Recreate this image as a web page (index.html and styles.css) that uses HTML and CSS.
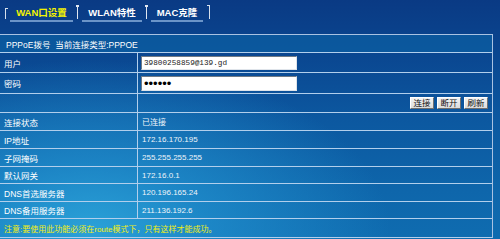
FILE: index.html
```html
<!DOCTYPE html>
<html lang="zh-CN">
<head>
<meta charset="utf-8">
<title>WAN口设置</title>
<link rel="stylesheet" href="styles.css">
</head>
<body>
<div class="tabs">
  <span class="brk brk-l"></span>
  <span class="tab tab-on tab-w1">WAN口设置</span>
  <span class="sep"></span>
  <span class="tab tab-w2">WLAN特性</span>
  <span class="sep"></span>
  <span class="tab tab-w3">MAC克隆</span>
  <span class="brk brk-r"></span>
</div>
<div class="panel">
  <div class="row head h18">PPPoE拨号&nbsp; 当前连接类型:PPPOE</div>
  <div class="row h20"><div class="lab">用户</div><div class="val"><input class="field" type="text" value="39800258859@139.gd"></div></div>
  <div class="row h21"><div class="lab">密码</div><div class="val"><input class="field pw" type="password" value="123456"></div></div>
  <div class="row h19"><div class="lab"></div><div class="val btns"><button class="btn">连接</button><button class="btn">断开</button><button class="btn">刷新</button></div></div>
  <div class="row h18"><div class="lab">连接状态</div><div class="val">已连接</div></div>
  <div class="row h18"><div class="lab">IP地址</div><div class="val">172.16.170.195</div></div>
  <div class="row h18"><div class="lab">子网掩码</div><div class="val">255.255.255.255</div></div>
  <div class="row h17"><div class="lab">默认网关</div><div class="val">172.16.0.1</div></div>
  <div class="row h18"><div class="lab">DNS首选服务器</div><div class="val">120.196.165.24</div></div>
  <div class="row h17"><div class="lab">DNS备用服务器</div><div class="val">211.136.192.6</div></div>
  <div class="row note h19">注意:要使用此功能必须在route模式下，只有这样才能成功。</div>
</div>
</body>
</html>
```
FILE: styles.css
```css
html, body {
  margin: 0;
  padding: 0;
}
body {
  width: 500px;
  height: 239px;
  overflow: hidden;
  font-family: "Liberation Sans", "Noto Sans CJK SC", sans-serif;
  font-size: 8.5px;
  color: #ffffff;
  background:
    radial-gradient(ellipse 300px 170px at 90px 230px, rgba(44,164,218,0.95) 0%, rgba(34,146,208,0.7) 40%, rgba(24,120,190,0) 100%),
    linear-gradient(to bottom, #0a3a84 0%, #0a4690 22%, #0c58a0 50%, #0e66ab 80%, #0f6cb0 100%);
}

/* ---------- tabs ---------- */
.tabs {
  display: flex;
  align-items: flex-start;
  height: 34px;
  box-sizing: border-box;
  padding: 5px 0 0 5px;
}
.brk {
  width: 2px;
  height: 10px;
  border-top: 1px solid #d6e0ec;
  margin-top: 3px;
}
.brk-l {
  border-left: 1px solid #d6e0ec;
  margin-right: 2px;
}
.brk-r {
  border-right: 1px solid #d6e0ec;
  margin-left: 4px;
  margin-top: 0;
  height: 13px;
}
.sep {
  display: flex;
  flex-direction: column;
  align-items: center;
  width: 9px;
}
.sep::before {
  content: "";
  width: 3px;
  height: 2px;
  background: #dfe7f1;
}
.sep::after {
  content: "";
  width: 1px;
  height: 12px;
  background: #dfe7f1;
}
.tab {
  height: 15px;
  line-height: 15px;
  text-align: center;
  font-size: 9.5px;
  font-weight: bold;
  color: #ffffff;
  border-bottom: 2px solid rgba(140, 178, 222, 0.75);
}
.tab-on {
  color: #f4f400;
}
.tab-w1 { width: 63px; }
.tab-w2 { width: 60px; }
.tab-w3 { width: 52px; }

/* ---------- panel ---------- */
.panel {
  width: 493px;
  box-sizing: border-box;
  border-top: 1px solid #a9c2e2;
  border-right: 1px solid #a9c2e2;
}
.row {
  display: grid;
  grid-template-columns: 138px 1fr;
  box-sizing: border-box;
  border-bottom: 1px solid #b2cfec;
  align-items: stretch;
}
.h17 { height: 17px; }
.h18 { height: 18px; }
.h19 { height: 19px; }
.h20 { height: 20px; }
.h21 { height: 21px; }

.head {
  display: flex;
  align-items: center;
  padding-left: 6px;
  background: rgba(12, 104, 170, 0.55);
}
.note {
  display: flex;
  align-items: center;
  padding-left: 4px;
  font-size: 8px;
  color: #f2ee10;
}
.lab {
  display: flex;
  align-items: center;
  padding-left: 4px;
  border-right: 1px solid #b2cfec;
}
.val {
  display: flex;
  align-items: center;
  padding-left: 4px;
  font-size: 8px;
  color: #eef4fa;
}
.btns {
  justify-content: flex-end;
  padding-right: 4px;
}

.field {
  width: 156px;
  height: 14px;
  box-sizing: border-box;
  margin: 0 0 0 -1px;
  padding: 0 2px;
  border: 1px solid;
  border-color: #6f7a86 #dfe4ea #dfe4ea #6f7a86;
  background: #ffffff;
  color: #222222;
  font-family: "Liberation Mono", monospace;
  font-size: 7.7px;
  outline: none;
}
.pw {
  height: 15px;
  font-family: "Liberation Sans", sans-serif;
  font-size: 13px;
  line-height: 13px;
  color: #000000;
}

.btn {
  width: 24px;
  height: 12px;
  box-sizing: border-box;
  margin: 0 0 0 3px;
  padding: 0;
  border: 1px solid;
  border-color: #ffffff #707070 #707070 #ffffff;
  background: linear-gradient(#f2f2f2, #dcdcdc);
  color: #111111;
  font-family: "Liberation Sans", "Noto Sans CJK SC", sans-serif;
  font-size: 8.5px;
  line-height: 10px;
}
```
